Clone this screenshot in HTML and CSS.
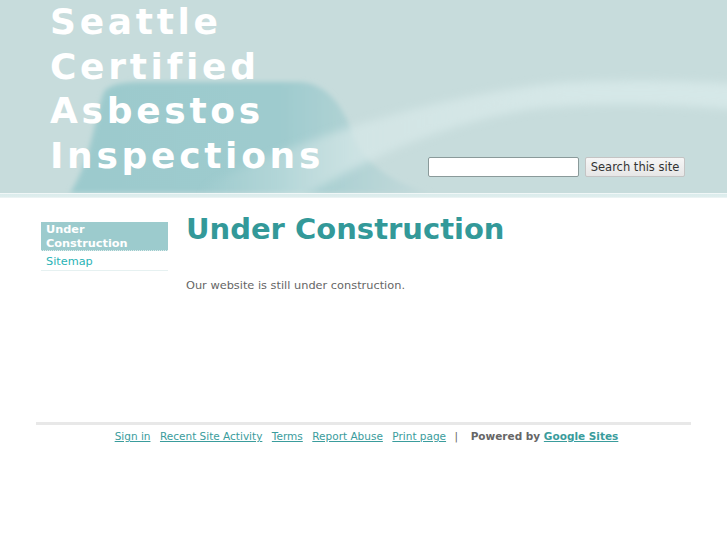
FILE: index.html
```html
<!DOCTYPE html>
<html>
<head>
<meta charset="utf-8">
<title>Seattle Certified Asbestos Inspections</title>
<link rel="stylesheet" href="styles.css">
</head>
<body>
<div class="header">
  <svg class="header-bg" viewBox="0 0 727 193" preserveAspectRatio="none" aria-hidden="true">
    <defs>
      <filter id="soft" x="-20%" y="-20%" width="140%" height="140%">
        <feGaussianBlur stdDeviation="2.5"/>
      </filter>
      <filter id="ribbonblur" x="-20%" y="-50%" width="140%" height="200%">
        <feGaussianBlur stdDeviation="4"/>
      </filter>
      <linearGradient id="dark" x1="70" y1="0" x2="420" y2="0" gradientUnits="userSpaceOnUse">
        <stop offset="0" stop-color="#9ccacd"/>
        <stop offset="0.6" stop-color="#9ecbce"/>
        <stop offset="1" stop-color="#c2d9da"/>
      </linearGradient>
      <linearGradient id="ribbon" x1="200" y1="0" x2="560" y2="0" gradientUnits="userSpaceOnUse">
        <stop offset="0" stop-color="#d6e8e8" stop-opacity="0"/>
        <stop offset="0.45" stop-color="#d6e8e8" stop-opacity="0.75"/>
        <stop offset="1" stop-color="#d6e8e8" stop-opacity="0.95"/>
      </linearGradient>
    </defs>
    <rect width="727" height="193" fill="#c7dcdc"/>
    <path d="M70 193 C92 160 96 110 104 92 Q110 82 140 82 L300 82 C330 84 345 110 355 140 C370 170 400 185 430 193 Z" fill="url(#dark)" filter="url(#soft)"/>
    <path d="M190 196 C260 150 430 95 560 83 C620 79 690 81 740 84 L740 110 C680 104 600 102 540 108 C450 120 360 160 300 200 Z" fill="url(#ribbon)" filter="url(#ribbonblur)"/>
  </svg>
  <h1 class="site-title">Seattle Certified Asbestos Inspections</h1>
  <form class="search">
    <input class="search-input" type="text">
    <button class="search-btn" type="button">Search this site</button>
  </form>
</div>
<div class="header-strip"></div>

<div class="page">
  <div class="content">
    <div class="sidebar">
      <a class="nav-item active" href="#">Under Construction</a>
      <a class="nav-item" href="#">Sitemap</a>
    </div>
    <div class="main">
      <h2 class="page-title">Under Construction</h2>
      <p class="text">Our website is still under construction.</p>
    </div>
  </div>
  <div class="footer">
    <a href="#">Sign in</a>
    <a href="#">Recent Site Activity</a>
    <a href="#">Terms</a>
    <a href="#">Report Abuse</a>
    <a href="#">Print page</a>
    <span class="sep">|</span>
    <span class="powered">Powered by <a href="#">Google Sites</a></span>
  </div>
</div>
</body>
</html>
```

FILE: styles.css
```css
html, body {
  margin: 0;
  padding: 0;
  background: #ffffff;
  font-family: "DejaVu Sans", Verdana, sans-serif;
}

.header {
  position: relative;
  height: 193px;
  display: flex;
  justify-content: space-between;
  align-items: flex-end;
  padding: 0 42px 0 50px;
  box-sizing: border-box;
  overflow: hidden;
}

.header-bg {
  position: absolute;
  left: 0;
  top: 0;
  width: 100%;
  height: 100%;
  z-index: 0;
}

.site-title {
  position: relative;
  z-index: 1;
  align-self: flex-start;
  margin: 0;
  width: 300px;
  color: #ffffff;
  font-family: "DejaVu Sans", Verdana, sans-serif;
  font-weight: bold;
  font-size: 36px;
  line-height: 44.7px;
  letter-spacing: 3.7px;
}

.search {
  position: relative;
  z-index: 1;
  display: flex;
  align-items: center;
  gap: 6px;
  margin: 0 0 16px 0;
}

.search-input {
  width: 151px;
  height: 20px;
  box-sizing: border-box;
  border: 1px solid #8a9a9a;
  border-radius: 2px;
  background: #ffffff;
  margin: 0;
  padding: 1px 3px;
}

.search-btn {
  height: 20px;
  width: 100px;
  box-sizing: border-box;
  margin: 1px 0 0 0;
  padding: 0 4px;
  border: 1px solid #c4c4c4;
  border-radius: 2px;
  background: linear-gradient(#f6f6f6, #e6e6e6);
  color: #333333;
  font-family: "DejaVu Sans", Verdana, sans-serif;
  font-size: 11.5px;
  line-height: 18px;
}

.header-strip {
  height: 5px;
  background: linear-gradient(#f0f7f7 0, #f0f7f7 1px, #dbecec 1px, #dfeeee 4px, #eaf3f3 4px);
}

.page {
  width: 655px;
  margin: 0 auto;
}

.content {
  display: flex;
  min-height: 224px;
}

.sidebar {
  width: 127px;
  margin: 24px 0 0 5px;
  display: flex;
  flex-direction: column;
}

.nav-item {
  display: block;
  padding: 1px 5px 1px 5px;
  font-size: 11.3px;
  line-height: 13.5px;
  color: #2ab3b6;
  text-decoration: none;
  border-bottom: 1px solid #e6f1f1;
}

.nav-item.active {
  background: #9ccbcd;
  color: #ffffff;
  font-weight: bold;
  padding: 1px 5px 0 5px;
  margin-bottom: 3px;
  border-bottom: 1px dotted #e0eeee;
}

.main {
  margin-left: 18px;
  flex: 1;
}

.page-title {
  margin: 13px 0 0 0;
  font-size: 29px;
  line-height: 36px;
  font-weight: bold;
  color: #339999;
}

.text {
  margin: 30px 0 0 0;
  font-size: 11.35px;
  line-height: 16px;
  color: #666666;
}

.footer {
  border-top: 3px solid #e8e8e8;
  padding-top: 4px;
  display: flex;
  justify-content: center;
  align-items: baseline;
  gap: 9.5px;
  font-size: 10.5px;
  line-height: 14px;
  color: #666666;
  padding-left: 6px;
}

.footer a {
  color: #3a9c9c;
  text-decoration: underline;
}

.footer .sep {
  margin: 0 3px 0 -1px;
}

.footer .powered {
  font-weight: bold;
  color: #666666;
}
```
